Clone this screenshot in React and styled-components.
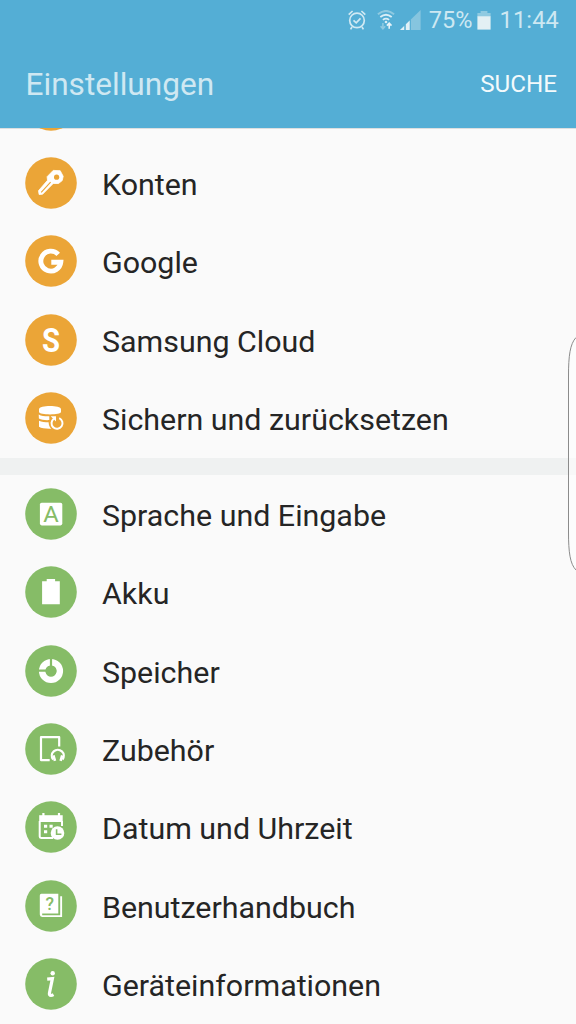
import React from 'react';
import styled, { createGlobalStyle } from 'styled-components';

const ORANGE = '#eba537';
const GREEN = '#86bc67';

const KeyIcon = () => (
    <>
        <path d="M28.2 13.4l7 .3 3 5.6-1 4.3-3.700 2.900h-5.300L17.500 37.300l-3.400.2-.6-3.800 9-10.400-.4-3.600z" fill="#fff" stroke="#fff" strokeWidth=".800" strokeLinejoin="round"/>
        <path d="M25.600 25.200L16.200 35.400" stroke={ORANGE} strokeWidth="1.100"/>
        <circle cx="31.600" cy="20.200" r="2.600" fill={ORANGE}/>
    </>
);

const GoogleIcon = () => (
    <path d="M33.2 19.3A10 10 0 1 0 35.8 27.2H26.3" fill="none" stroke="#fff" strokeWidth="4.9"/>
);

const CloudIcon = () => <Glyph x="26" y="37.6" $size={33} $weight={700} textLength="18" lengthAdjust="spacingAndGlyphs">S</Glyph>;

const BackupIcon = () => (
    <>
        <path d="M14 17.2c0-4.300 22-4.300 22 0v2.800c0 3.200-22 3.200-22 0z" fill="#fff"/>
        <path d="M13.700 22.400c2.800 1.700 7 1.900 10.600 1.800v3.900c-4.200.2-8-.2-10.400-1.600z" fill="#fff"/>
        <path d="M14 28.700c2.500 1.300 6 1.500 9.600 1.500.1 2.700 1 4.900 2.700 6.500-4.700.2-9.800-.2-12.300-1.900z" fill="#fff"/>
        <path d="M34.200 26.200a5.500 5.500 0 1 1-5.400.6" fill="none" stroke="#fff" strokeWidth="2"/>
        <path d="M25.700 24.300h5.300v5.300z" fill="#fff"/>
    </>
);

const LanguageIcon = () => (
    <>
        <rect x="14.9" y="14.8" width="22.4" height="22.6" rx="1.8" fill="#fff"/>
        <Glyph x="26" y="33.6" $size={21.5} $fill={GREEN} textLength="15.5" lengthAdjust="spacingAndGlyphs">A</Glyph>
    </>
);

const BatteryIcon = () => (
    <path d="M17.1 15.2h4.6v-2.3h8.4v2.3h4.7v23H17.1z" fill="#fff"/>
);

const StorageIcon = () => (
    <>
        <circle cx="26" cy="26" r="8.8" fill="none" stroke="#fff" strokeWidth="6.6"/>
        <path d="M26 13v13M13 25.6h13" stroke={GREEN} strokeWidth="2.2"/>
        <circle cx="26" cy="26" r="5.5" fill={GREEN}/>
    </>
);

const AccessoryIcon = () => (
    <>
        <path d="M34.2 23.4V14.2H16v22.9h8.7" fill="none" stroke="#fff" strokeWidth="2.2" strokeLinejoin="round"/>
        <path d="M28.1 36.5A6 6 0 1 1 37.5 36.5" fill="none" stroke="#fff" strokeWidth="2.2"/>
        <path d="M28.4 32.4l1.6 5.4M37.2 32.4l-1.6 5.4" stroke="#fff" strokeWidth="2.6"/>
    </>
);

const DateIcon = () => (
    <>
        <path d="M14.2 14.2h23.5V21H14.2z" fill="#fff"/>
        <path d="M18.4 12v4M34 12v4" stroke="#fff" strokeWidth="2.2"/>
        <path d="M14.7 20v15.6q0 1.4 1.4 1.4h12M37 20v5" fill="none" stroke="#fff" strokeWidth="2"/>
        <path d="M19 23.7h3.2v3.1H19zM24.5 23.7h3.2v3.1h-3.2zM19 29.2h3.2v3.1H19z" fill="#fff"/>
        <circle cx="32.5" cy="32" r="6.8" fill="#fff"/>
        <path d="M31.6 28.2v5h4.8" fill="none" stroke={GREEN} strokeWidth="1.6"/>
    </>
);

const ManualIcon = () => (
    <>
        <path d="M16.4 13.8h16.9v19.6H17.2v1.8h18V16.3h1.9V37H17.2q-2.4 0-2.4-2.4V15.4q0-1.6 1.6-1.6z" fill="#fff"/>
        <Glyph x="24.8" y="29.9" $size={17.5} $weight={500} $fill={GREEN}>?</Glyph>
    </>
);

const InfoIcon = () => (
    <>
        <circle cx="27.7" cy="15.2" r="2.2" fill="#fff"/>
        <path d="M22.2 21.2q2.6-.2 5.2-.6l-3 14.6q-.3 2.2 1.6 2.2 1.2 0 2.5-.7" fill="none" stroke="#fff" strokeWidth="3.2"/>
    </>
);

const accounts = [
    { name: 'Cloud und Konten' },
    { name: 'Konten', icon: <KeyIcon/> },
    { name: 'Google', icon: <GoogleIcon/> },
    { name: 'Samsung Cloud', icon: <CloudIcon/> },
    { name: 'Sichern und zurücksetzen', icon: <BackupIcon/> },
];

const system = [
    { name: 'Sprache und Eingabe', icon: <LanguageIcon/> },
    { name: 'Akku', icon: <BatteryIcon/> },
    { name: 'Speicher', icon: <StorageIcon/> },
    { name: 'Zubehör', icon: <AccessoryIcon/> },
    { name: 'Datum und Uhrzeit', icon: <DateIcon/> },
    { name: 'Benutzerhandbuch', icon: <ManualIcon/> },
    { name: 'Geräteinformationen', icon: <InfoIcon/> },
];

const SettingRow = ({ item, color }) => (
    <Row>
        <IconCircle viewBox="0 0 52 52">
            <circle cx="26" cy="26" r="25.8" fill={color}/>
            {item.icon}
        </IconCircle>
        {item.icon && <Label>{item.name}</Label>}
    </Row>
);

const StatusIcons = () => (
    <>
        <StatusIcon $width={18} $gap={11} viewBox="0 0 18 20">
            <circle cx="9" cy="10.4" r="7.3" fill="none" stroke="#d0e9f3" strokeWidth="1.7"/>
            <path d="M5.5 10.3l2.7 2.6 4.3-4.5M.7 4.6L4.6 1M17.3 4.6L13.4 1M4 17l-1.4 2.4M14 17l1.4 2.4" fill="none" stroke="#d0e9f3" strokeWidth="1.7"/>
        </StatusIcon>
        <StatusIcon $width={18} $gap={5} viewBox="0 0 18 20">
            <path d="M.9 4.3q8.1-6.8 16.2 0" fill="none" stroke="#8fcae1" strokeWidth="1.9"/>
            <path d="M3.3 7q5.7-4.6 11.4 0M5.9 9.9q3.1-2.5 6.2 0" fill="none" stroke="#d9eef6" strokeWidth="1.8"/>
            <circle cx="9" cy="12" r="1.3" fill="#d9eef6"/>
            <path d="M5.9 13v6M3.6 16.2l2.3 2.5 2.3-2.5" fill="none" stroke="#8fcae1" strokeWidth="1.6"/>
            <path d="M12.2 18.7v-5.4M9.9 15.6l2.3-2.5 2.3 2.5" fill="none" stroke="#e7f4f9" strokeWidth="1.6"/>
        </StatusIcon>
        <StatusIcon $width={21} $gap={8} viewBox="0 0 21 20">
            <path d="M0 20L20.6 0v20z" fill="#86c5df"/>
            <path d="M0 20l4.2-4V20zM5.9 14.3l3.8-3.7V20H5.9z" fill="#e1f1f7"/>
            <path d="M5 14.6V20M10.4 9.5V20" stroke="#54aed5" strokeWidth="1"/>
        </StatusIcon>
    </>
);

const App = () => (
    <Screen>
        <GlobalStyle/>
        <StatusBar>
            <StatusIcons/>
            <Percent>75%</Percent>
            <StatusIcon $width={14} $gap={8} viewBox="0 0 14 20">
                <path d="M.4 3h3.2V1h6.8v2h3.2v3.4H.4z" fill="#8fcae1"/>
                <path d="M.4 6.2h13.2v13.4H.4z" fill="#e3f0f4"/>
            </StatusIcon>
            <Time>11:44</Time>
        </StatusBar>
        <Header>
            <Title>Einstellungen</Title>
            <SearchButton>SUCHE</SearchButton>
        </Header>
        <List>
            <Scrolled>
                {accounts.map((item) => <SettingRow key={item.name} item={item} color={ORANGE}/>)}
                <Divider/>
                {system.map((item) => <SettingRow key={item.name} item={item} color={GREEN}/>)}
            </Scrolled>
        </List>
        <EdgeHandle viewBox="0 0 10 236">
            <path d="M10 1.5C4 8 2.5 20 2.5 40V196C2.5 216 4 228 10 234" fill="#fdfdfd" fillOpacity=".6" stroke="#8b8b8b" strokeWidth="1"/>
        </EdgeHandle>
    </Screen>
);

const GlobalStyle = createGlobalStyle`
    body {
        margin: 0;
        background: #fafafa;
        font-family: Roboto, sans-serif;
    }
`;
const Screen = styled.div`
    position: relative;
    display: flex;
    flex-direction: column;
    width: 576px;
    height: 1024px;
    overflow: hidden;
    background: #fafafa;
`;
const StatusBar = styled.div`
    display: flex;
    align-items: center;
    justify-content: flex-end;
    box-sizing: border-box;
    height: 40px;
    padding-right: 17px;
    background: #54aed5;
    color: #cde8f2;
    font-size: 23.5px;
`;
const StatusIcon = styled.svg`
    flex: none;
    width: ${({$width}) => $width}px;
    height: 20px;
    margin-right: ${({$gap}) => $gap}px;
`;
const Percent = styled.span`
    margin-right: 5px;
`;
const Time = styled.span`
    letter-spacing: .2px;
`;
const Header = styled.div`
    display: flex;
    align-items: center;
    justify-content: space-between;
    box-sizing: border-box;
    height: 88px;
    padding: 0 19px 0 25.5px;
    background: #54aed5;
`;
const Title = styled.h1`
    margin: 0;
    color: #cfe8f2;
    font-size: 31.6px;
    font-weight: 400;
`;
const SearchButton = styled.button`
    padding: 0;
    border: 0;
    background: none;
    color: #f3fafc;
    font-family: inherit;
    font-size: 24.2px;
`;
const List = styled.div`
    flex: 1;
    overflow: hidden;
    box-shadow: inset 0 1px 0 #dcdfe0;
`;
const Scrolled = styled.div`
    margin-top: -62.5px;
`;
const Row = styled.div`
    display: flex;
    align-items: center;
    height: 78.4px;
    padding-left: 25px;
`;
const IconCircle = styled.svg`
    flex: none;
    width: 52px;
    height: 52px;
`;
const Glyph = styled.text`
    fill: ${({$fill}) => $fill || '#fff'};
    font-size: ${({$size}) => $size}px;
    font-weight: ${({$weight}) => $weight || 400};
    text-anchor: middle;
`;
const Label = styled.span`
    margin: 3px 0 0 25px;
    color: #252525;
    font-size: 30.4px;
    white-space: nowrap;
`;
const Divider = styled.div`
    height: 16.6px;
    margin-top: .7px;
    background: #eff1f1;
`;
const EdgeHandle = styled.svg`
    position: absolute;
    top: 336px;
    right: 0;
    width: 10px;
    height: 236px;
`;

export default App;
